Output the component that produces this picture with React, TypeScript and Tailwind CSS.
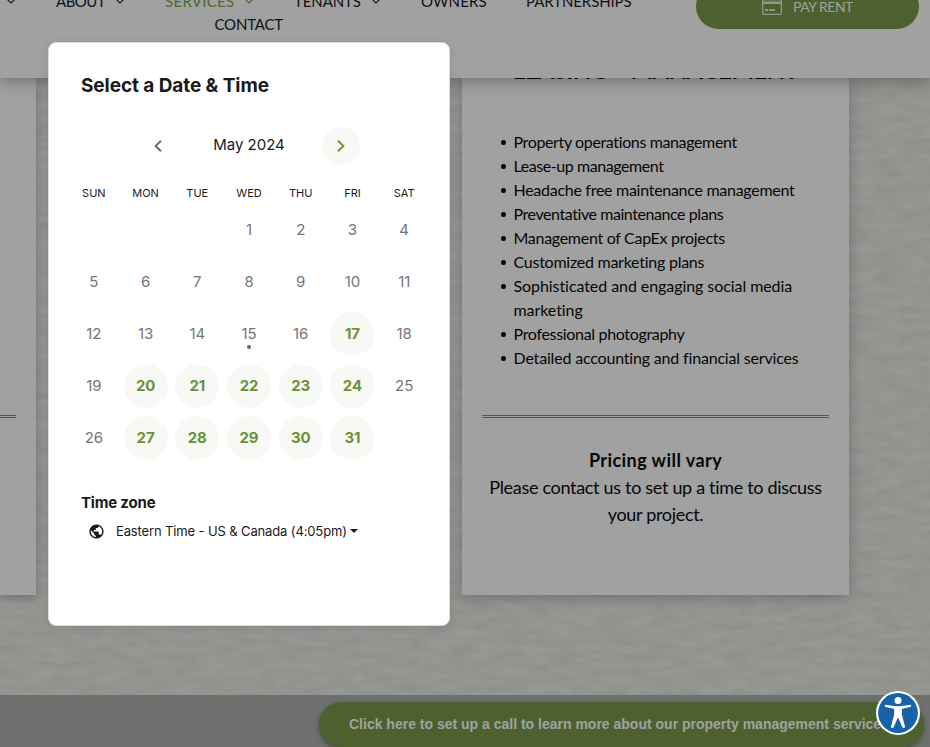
import { MdPublic } from "react-icons/md";

type NavEntry = { label: string; box: string; text: string; arrow?: boolean; active?: boolean };

const NAV: NavEntry[] = [
  { label: "ABOUT", box: "w-[48px] mr-[11px]", text: "tracking-[-0.5px]", arrow: true },
  { label: "SERVICES", box: "w-[69px] mr-[10px]", text: "tracking-[0.3px]", arrow: true, active: true },
  { label: "TENANTS", box: "w-[67px] mr-[10px]", text: "tracking-[-0.1px]", arrow: true },
  { label: "OWNERS", box: "w-[66px] mr-[39px]", text: "tracking-[0.1px]" },
  { label: "PARTNERSHIPS", box: "w-[106px]", text: "tracking-[-0.1px]" },
];

const SERVICES: { text: string; tracking: string }[] = [
  { text: "Property operations management", tracking: "tracking-[-0.37px]" },
  { text: "Lease-up management", tracking: "tracking-[-0.43px]" },
  { text: "Headache free maintenance management", tracking: "tracking-[-0.28px]" },
  { text: "Preventative maintenance plans", tracking: "tracking-[-0.43px]" },
  { text: "Management of CapEx projects", tracking: "tracking-[-0.29px]" },
  { text: "Customized marketing plans", tracking: "tracking-[-0.25px]" },
  { text: "Sophisticated and engaging social media marketing", tracking: "tracking-[-0.07px]" },
  { text: "Professional photography", tracking: "tracking-[-0.32px]" },
  { text: "Detailed accounting and financial services", tracking: "tracking-[-0.18px]" },
];

const WEEKDAYS = ["SUN", "MON", "TUE", "WED", "THU", "FRI", "SAT"];
const AVAILABLE = [17, 20, 21, 22, 23, 24, 27, 28, 29, 30, 31];
const TODAY = 15;
const CELLS: (number | null)[] = [null, null, null, ...Array.from({ length: 31 }, (_, i) => i + 1)];

function Caret({ color }: { color: string }) {
  return (
    <svg className="-mt-px h-[6px] w-[10px] shrink-0" viewBox="0 0 10 6" fill="none" stroke={color} strokeWidth="1.2">
      <path d="M0.6 0.7 L5 5 L9.4 0.7" />
    </svg>
  );
}

function Backdrop() {
  return (
    <svg className="absolute inset-0 h-full w-full" aria-hidden="true">
      <filter id="plaster" x="0" y="0" width="100%" height="100%" colorInterpolationFilters="sRGB">
        <feTurbulence type="fractalNoise" baseFrequency="0.04 0.13" numOctaves="5" seed="8" />
        <feColorMatrix values="0.06 0 0 0 0.545  0.06 0 0 0 0.552  0.06 0 0 0 0.538  0 0 0 0 1" />
      </filter>
      <rect width="100%" height="100%" filter="url(#plaster)" />
    </svg>
  );
}

function Header() {
  return (
    <header className="relative z-10 flex h-[78px] w-full shrink-0 items-start justify-between bg-[#a1a1a1] pr-[11px] shadow-[0_2px_16px_rgba(0,0,0,0.36)]">
      <nav className="-mt-[10px] flex flex-col pl-[6px] text-[15px] leading-[23px] text-[#111]">
        <div className="flex items-center">
          <Caret color="#1a1a1a" />
          <span className="w-[40px]" />
          {NAV.map((n) => (
            <div key={n.label} className={n.active ? "flex items-center text-[#4d6a2a]" : "flex items-center"}>
              <span className={`${n.box} ${n.text} whitespace-nowrap`}>{n.label}</span>
              {n.arrow && <Caret color={n.active ? "#4d6a2a" : "#1a1a1a"} />}
              {n.arrow && <span className="w-[40px]" />}
            </div>
          ))}
        </div>
        <span className="pl-[208.5px] tracking-[-0.2px]">CONTACT</span>
      </nav>
      <button className="-mt-[16px] flex h-[45px] w-[223px] items-center justify-center gap-[11px] rounded-full bg-[#4d612f] text-[14px] tracking-[-0.5px] text-[#a1a1a1]">
        <svg className="h-[16px] w-[20px]" viewBox="0 0 20 16" fill="none" stroke="#93998a" strokeWidth="1.3">
          <rect x="0.65" y="0.65" width="18.7" height="14.7" rx="1.4" />
          <path d="M1 3.2H19M1 4.4H19" />
          <path d="M3 11H6M7.2 11H13" strokeWidth="1.8" />
        </svg>
        PAY RENT
      </button>
    </header>
  );
}

function ServiceCard() {
  return (
    <section className="flex h-[517px] w-[387px] flex-col bg-[#a1a1a1] px-[20px] text-[#060606] shadow-[0_3px_12px_rgba(0,0,0,0.24)]">
      <h2 className="-mt-[22px] h-[28px] text-center text-[24px] leading-[28px] font-bold tracking-[-0.72px] whitespace-nowrap">
        LEASING + MANAGEMENT
      </h2>
      <ul className="mt-[46px] h-[285px] text-[16px] leading-[24px]">
        {SERVICES.map((s) => (
          <li key={s.text} className="flex pl-[19px]">
            <span className="mt-[10px] mr-[8px] h-[4.5px] w-[4.5px] shrink-0 rounded-full bg-[#060606]" />
            <span className={s.tracking}>{s.text}</span>
          </li>
        ))}
      </ul>
      <div className="border-t-3 border-double border-[#4d612f]" />
      <div className="mt-[29px] text-center text-[18px] leading-[27px]">
        <p className="font-bold tracking-[0.44px]">Pricing will vary</p>
        <p className="-mx-2 tracking-[-0.31px]">
          Please contact us to set up a time to discuss
          <br />
          your project.
        </p>
      </div>
    </section>
  );
}

function Day({ day }: { day: number | null }) {
  if (day === null) return <span />;
  const open = AVAILABLE.includes(day);
  return (
    <div className="flex h-[52px] items-center justify-center">
      <span
        className={
          open
            ? "flex h-[44px] w-[44px] items-center justify-center rounded-full bg-[#f8f9f5] font-bold text-[#6b9239]"
            : "relative flex h-[44px] w-[44px] items-center justify-center text-[#757575]"
        }
      >
        {day}
        {day === TODAY && <i className="absolute bottom-[7px] left-[20px] h-[4px] w-[4px] rounded-full bg-[#666]" />}
      </span>
    </div>
  );
}

function Scheduler() {
  return (
    <div className="absolute top-[42px] left-[48px] z-20 flex h-[584px] w-[402px] flex-col rounded-[8px] border border-[#dcdcdc] bg-white font-['Inter','Liberation_Sans',sans-serif] text-[#1a1a1a] shadow-[0_1px_8px_rgba(0,0,0,0.1)]">
      <h1 className="mt-[30px] ml-[32px] text-[19px] leading-[26px] font-bold tracking-[-0.08px]">Select a Date &amp; Time</h1>
      <div className="mt-[28px] ml-[90px] flex h-[38px] w-[221px] items-center justify-between">
        <span className="flex h-[38px] w-[38px] items-center justify-center">
          <svg className="h-[12px] w-[8px]" viewBox="0 0 8 12" fill="none" stroke="#6b6b6b" strokeWidth="1.9">
            <path d="M7 0.8 L1.6 6 L7 11.2" />
          </svg>
        </span>
        <span className="-mt-[3px] mr-px text-[15px] leading-[20px]">May 2024</span>
        <span className="flex h-[38px] w-[38px] items-center justify-center rounded-full bg-[#f8f9f5]">
          <svg className="h-[12px] w-[8px]" viewBox="0 0 8 12" fill="none" stroke="#6b9239" strokeWidth="1.9">
            <path d="M1 0.8 L6.4 6 L1 11.2" />
          </svg>
        </span>
      </div>
      <div className="mt-[19px] ml-[19px] grid w-[362px] grid-cols-7 text-center text-[11px] leading-[18px]">
        {WEEKDAYS.map((w) => (
          <span key={w}>{w}</span>
        ))}
      </div>
      <div className="mt-[2px] ml-[19px] grid w-[362px] grid-cols-7 text-[15px] tracking-[-0.1px]">
        {CELLS.map((d, i) => (
          <Day key={i} day={d} />
        ))}
      </div>
      <h2 className="mt-[29px] ml-[32px] text-[15px] leading-[20px] font-bold tracking-[-0.18px]">Time zone</h2>
      <div className="mt-[8px] ml-[39px] flex items-center text-[13px] leading-[20px] tracking-[-0.13px]">
        <MdPublic className="mr-[11px] h-[17px] w-[17px]" />
        Eastern Time - US &amp; Canada (4:05pm)
        <span className="ml-[3px] border-x-[4px] border-t-[4px] border-x-transparent border-t-[#1a1a1a]" />
      </div>
    </div>
  );
}

function CallBar() {
  return (
    <footer className="relative h-[52px] w-full shrink-0 bg-[#6e706e]">
      <button className="absolute top-[7px] left-[319px] h-[45px] w-[605px] rounded-full bg-[#4d612f] pl-[30px] text-left font-['Liberation_Sans',sans-serif] text-[14px] leading-[45px] font-bold whitespace-nowrap text-[#a1a1a1] shadow-[0_2px_5px_rgba(0,0,0,0.35)]">
        Click here to set up a call to learn more about our property management services
      </button>
      <svg className="absolute -top-[4px] left-[876px] h-[44px] w-[44px]" viewBox="0 0 44 44">
        <circle cx="22" cy="22" r="22" fill="#fff" />
        <circle cx="22" cy="22" r="19.9" fill="#1862a8" />
        <circle cx="22" cy="9.6" r="3.5" fill="#fff" />
        <path
          fill="#fff"
          d="M9.9 13.8 Q22 16.6 34.1 13.8 Q35.2 13.7 35.2 14.8 Q35.2 15.7 34.2 16 L26.5 17.8 Q25.8 18 25.8 18.8 V23.5 L29 35.4 Q29.1 36.9 27.8 37 Q26.7 37.1 26.2 35.9 L22 26.3 L17.8 35.9 Q17.3 37.1 16.2 37 Q14.9 36.9 15 35.4 L18.2 23.5 V18.8 Q18.2 18 17.5 17.8 L9.8 16 Q8.8 15.7 8.8 14.8 Q8.8 13.7 9.9 13.8Z"
        />
      </svg>
    </footer>
  );
}

export default function App() {
  return (
    <div className="relative flex h-[747px] w-[930px] flex-col overflow-hidden bg-[#92948f] font-['Lato','Liberation_Sans',sans-serif]">
      <Backdrop />
      <Header />
      <main className="relative flex flex-1 items-start gap-[426px]">
        <section className="h-[517px] w-[36px] bg-[#a1a1a1] pt-[337px] pr-[20px] shadow-[0_3px_12px_rgba(0,0,0,0.24)]">
          <div className="border-t-3 border-double border-[#4d612f]" />
        </section>
        <ServiceCard />
      </main>
      <CallBar />
      <Scheduler />
    </div>
  );
}
